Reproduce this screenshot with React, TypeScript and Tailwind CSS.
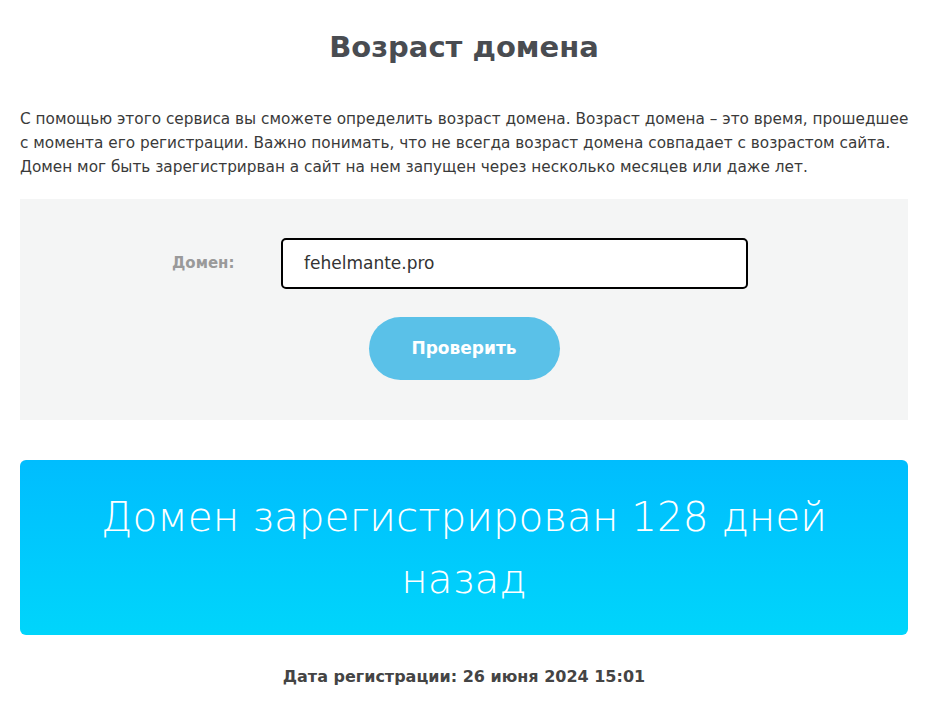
import React from 'react'

const font = { fontFamily: '"DejaVu Sans", "Open Sans", sans-serif' }

const App = () => {
  return (
    <div className="min-h-screen bg-white" style={font}>
      <div className="w-[888px] ml-[20px] pt-[29px]">
        <h1 className="text-center text-[29px] leading-[36px] font-bold text-[#494c51]">
          Возраст домена
        </h1>

        <p className="mt-[42px] text-[15.3px] leading-[24px] text-[#3a3a3a] whitespace-nowrap">
          С помощью этого сервиса вы сможете определить возраст домена. Возраст домена – это время, прошедшее<br />
          с момента его регистрации. Важно понимать, что не всегда возраст домена совпадает с возрастом сайта.<br />
          Домен мог быть зарегистрирван а сайт на нем запущен через несколько месяцев или даже лет.
        </p>

        <div className="mt-[20px] h-[221px] bg-[#f4f5f5] flex flex-col items-center pt-[39px]">
          <div className="flex items-center pr-[8px]">
            <span className="w-[109px] text-[15px] font-bold text-[#9a9a9a]">Домен:</span>
            <div className="w-[467px] h-[51px] border-2 border-black rounded-[5px] bg-white flex items-center pl-[21px] text-[17px] text-[#333]">
              fehelmante.pro
            </div>
          </div>
          <button className="mt-[28px] w-[191px] h-[63px] rounded-full bg-[#5ac1e8] text-white text-[17px] font-bold">
            Проверить
          </button>
        </div>

        <div className="mt-[40px] h-[175px] rounded-[6px] bg-gradient-to-b from-[#00bdfe] to-[#00d5fb] flex items-center justify-center px-[50px]">
          <p className="text-center text-white text-[40.5px] leading-[62px] font-light">
            Домен зарегистрирован 128 дней назад
          </p>
        </div>

        <p className="mt-[30px] text-center text-[16px] font-bold text-[#444]">
          Дата регистрации: 26 июня 2024 15:01
        </p>
      </div>
    </div>
  )
}

export default App
